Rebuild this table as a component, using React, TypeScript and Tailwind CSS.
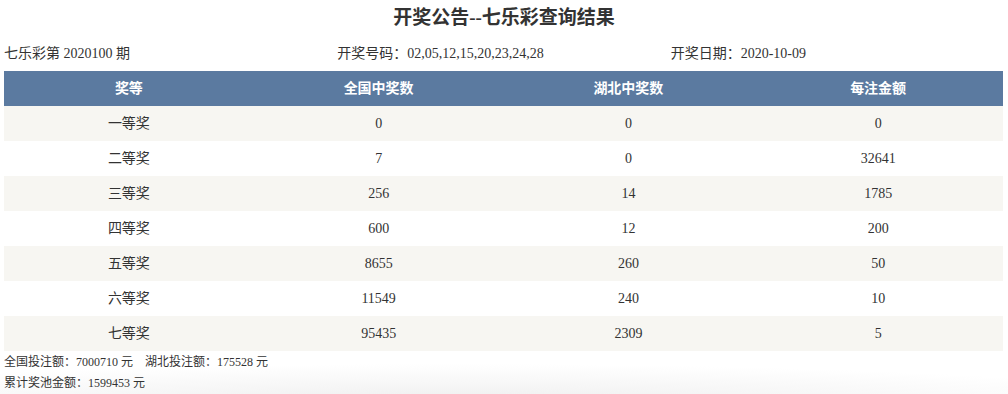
import React from "react";

const rows = [
  ["一等奖", "0", "0", "0"],
  ["二等奖", "7", "0", "32641"],
  ["三等奖", "256", "14", "1785"],
  ["四等奖", "600", "12", "200"],
  ["五等奖", "8655", "260", "50"],
  ["六等奖", "11549", "240", "10"],
  ["七等奖", "95435", "2309", "5"],
];

const serif = { fontFamily: '"Liberation Serif", "Noto Sans CJK SC", serif' };

export default function App() {
  return (
    <div className="w-[1008px] h-[394px] bg-white text-[#333] overflow-hidden" style={serif}>
      <h1 className="h-[36px] pt-[4px] text-center text-[19px] font-bold leading-[28px] text-[#333]">
        开奖公告--七乐彩查询结果
      </h1>
      <div className="mx-[4px] grid grid-cols-3 h-[35px] items-center text-[14px] leading-[20px]">
        <div>七乐彩第 2020100 期</div>
        <div>开奖号码：02,05,12,15,20,23,24,28</div>
        <div>开奖日期：2020-10-09</div>
      </div>
      <div className="mx-[4px] w-[999px]">
        <div className="grid grid-cols-4 h-[35px] items-center bg-[#5b7aa0] text-white font-bold text-[14px]">
          <div className="text-center">奖等</div>
          <div className="text-center">全国中奖数</div>
          <div className="text-center">湖北中奖数</div>
          <div className="text-center">每注金额</div>
        </div>
        {rows.map((r, i) => (
          <div
            key={i}
            className={`grid grid-cols-4 h-[35px] items-center text-[14px] ${i % 2 === 0 ? "bg-[#f7f6f2]" : "bg-white"}`}
          >
            {r.map((c, j) => (
              <div key={j} className="text-center">
                {c}
              </div>
            ))}
          </div>
        ))}
      </div>
      <div className="h-[43px] pl-[4px] pt-[1px] text-[12px] leading-[21px] bg-[radial-gradient(ellipse_75%_100%_at_45%_130%,#ececec_0%,#f6f6f6_50%,#ffffff_100%)]">
        <div>全国投注额：7000710 元　湖北投注额：175528 元</div>
        <div>累计奖池金额：1599453 元</div>
      </div>
    </div>
  );
}
